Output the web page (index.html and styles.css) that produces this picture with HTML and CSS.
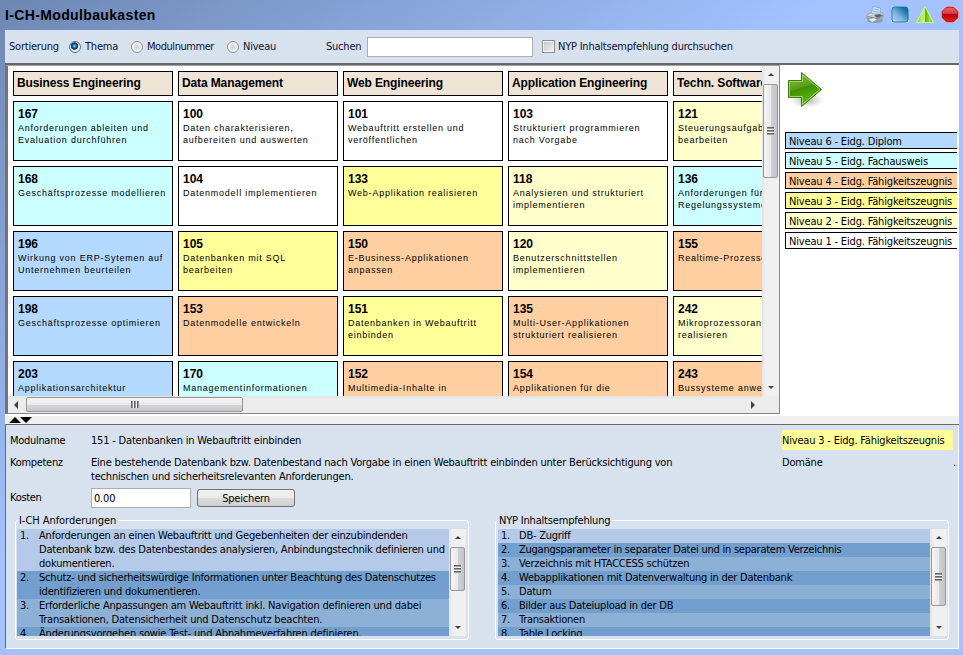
FILE: index.html
```html
<!DOCTYPE html>
<html lang="de">
<head>
  <meta charset="UTF-8" />
  <title>I-CH-Modulbaukasten</title>
  <link rel="stylesheet" href="styles.css">
</head>
<body>
  <header class="titlebar">
    <h1>I-CH-Modulbaukasten</h1>
    <div class="window-icons">
      <svg width="20" height="20" viewBox="0 0 20 20">
        <defs>
          <linearGradient id="g-print" x1="0" y1="0" x2="0" y2="1"><stop offset="0" stop-color="#f2f2ee"/><stop offset="1" stop-color="#8b9094"/></linearGradient>
        </defs>
        <ellipse cx="10" cy="15.500" rx="8" ry="2.5" fill="#5f78a8" opacity=".5"/>
        <path d="M1.500 10.500 L7 7 L17.500 8 L18.500 12 L13 17 L2 13.500 Z" fill="url(#g-print)" stroke="#8a939a" stroke-width=".7"/>
        <path d="M6 8.500 L8 1.500 L15.500 3 L15 9.500 Z" fill="#c8e2f5" stroke="#7fa3c0" stroke-width=".7"/>
        <path d="M8.500 4 L14 5 M7.800 6.300 L13.800 7.200" stroke="#8fb8d8" stroke-width="1"/>
        <path d="M9 10 L15 9 L17.500 10.500 L12 13 Z" fill="#5c646a"/>
        <path d="M2.500 11.500 L12 14 L18 10.500" fill="none" stroke="#6a7278" stroke-width=".8"/>
        <path d="M3 14.200 L9 12.800 L13 14.800 L7 17.300 Z" fill="#e9f0f2" stroke="#7a868c" stroke-width=".6"/>
      </svg>
      <svg width="20" height="20" viewBox="0 0 20 20">
        <defs>
          <linearGradient id="g-blue" x1="0" y1="1" x2="1" y2="0"><stop offset="0" stop-color="#b9d6f2"/><stop offset=".4" stop-color="#82b4dc"/><stop offset=".8" stop-color="#1672ae"/><stop offset="1" stop-color="#0868a8"/></linearGradient>
        </defs>
        <rect x="1" y="1" width="18" height="17" rx="3.500" fill="#d9ecfa"/>
        <rect x="1.900" y="1.900" width="16.200" height="15.200" rx="2.500" fill="url(#g-blue)" stroke="#0a69a8" stroke-width=".9"/>
      </svg>
      <svg width="20" height="20" viewBox="0 0 20 20">
        <defs>
          <linearGradient id="g-tri" x1="0" y1="0" x2="1" y2="0"><stop offset="0" stop-color="#7cc51e"/><stop offset=".3" stop-color="#b9ee62"/><stop offset=".48" stop-color="#c4f270"/><stop offset=".52" stop-color="#62b010"/><stop offset=".8" stop-color="#a2e048"/><stop offset="1" stop-color="#6cb81c"/></linearGradient>
        </defs>
        <path d="M10 1.500 L18.500 17.500 H1.500 Z" fill="url(#g-tri)" stroke="#d2f2a0" stroke-width="1" stroke-linejoin="round"/>
      </svg>
      <svg width="20" height="20" viewBox="0 0 20 20">
        <defs>
          <linearGradient id="g-stop" x1="0" y1="0" x2="0" y2="1"><stop offset="0" stop-color="#e06068"/><stop offset=".42" stop-color="#d8404a"/><stop offset=".5" stop-color="#bc0008"/><stop offset="1" stop-color="#e02024"/></linearGradient>
        </defs>
        <path d="M6 1 H14 L19 6 V13 L14 18 H6 L1 13 V6 Z" fill="#efc4cc"/>
        <path d="M6.400 2.200 H13.600 L17.800 6.400 V12.600 L13.600 16.800 H6.400 L2.200 12.600 V6.400 Z" fill="url(#g-stop)" stroke="#b80810"/>
      </svg>
    </div>
  </header>

  <main class="panel">
    <div class="toolbar">
      <span class="sort-label">Sortierung</span>
      <span class="radio checked"></span><span class="thema">Thema</span>
      <span class="radio"></span><span class="modulnummer">Modulnummer</span>
      <span class="radio"></span><span class="niveau">Niveau</span>
      <span class="search-label">Suchen</span>
      <input type="text" class="search">
      <span class="checkbox"></span><span class="nyp-label">NYP Inhaltsempfehlung durchsuchen</span>
    </div>

    <div class="top">
      <div class="scrollpane">
        <div class="viewport">
          <div class="column">
            <h2>Business Engineering</h2>
            <div class="card n5"><b>167</b><p>Anforderungen ableiten und<br>Evaluation durchführen</p></div>
            <div class="card n5"><b>168</b><p>Geschäftsprozesse modellieren</p></div>
            <div class="card n6"><b>196</b><p>Wirkung von ERP-Sytemen auf<br>Unternehmen beurteilen</p></div>
            <div class="card n6"><b>198</b><p>Geschäftsprozesse optimieren</p></div>
            <div class="card n6"><b>203</b><p>Applikationsarchitektur</p></div>
          </div>
          <div class="column">
            <h2>Data Management</h2>
            <div class="card n1"><b>100</b><p>Daten charakterisieren,<br>aufbereiten und auswerten</p></div>
            <div class="card n1"><b>104</b><p>Datenmodell implementieren</p></div>
            <div class="card n3"><b>105</b><p>Datenbanken mit SQL<br>bearbeiten</p></div>
            <div class="card n4"><b>153</b><p>Datenmodelle entwickeln</p></div>
            <div class="card n5"><b>170</b><p>Managementinformationen</p></div>
          </div>
          <div class="column">
            <h2>Web Engineering</h2>
            <div class="card n1"><b>101</b><p>Webauftritt erstellen und<br>veröffentlichen</p></div>
            <div class="card n3"><b>133</b><p>Web-Applikation realisieren</p></div>
            <div class="card n4"><b>150</b><p>E-Business-Applikationen<br>anpassen</p></div>
            <div class="card n3"><b>151</b><p>Datenbanken in Webauftritt<br>einbinden</p></div>
            <div class="card n4"><b>152</b><p>Multimedia-Inhalte in</p></div>
          </div>
          <div class="column">
            <h2>Application Engineering</h2>
            <div class="card n1"><b>103</b><p>Strukturiert programmieren<br>nach Vorgabe</p></div>
            <div class="card n2"><b>118</b><p>Analysieren und strukturiert<br>implementieren</p></div>
            <div class="card n2"><b>120</b><p>Benutzerschnittstellen<br>implementieren</p></div>
            <div class="card n4"><b>135</b><p>Multi-User-Applikationen<br>strukturiert realisieren</p></div>
            <div class="card n4"><b>154</b><p>Applikationen für die</p></div>
          </div>
          <div class="column">
            <h2>Techn. Software</h2>
            <div class="card n2"><b>121</b><p>Steuerungsaufgaben<br>bearbeiten</p></div>
            <div class="card n5"><b>136</b><p>Anforderungen für<br>Regelungssysteme</p></div>
            <div class="card n4"><b>155</b><p>Realtime-Prozesse</p></div>
            <div class="card n2"><b>242</b><p>Mikroprozessoranw<br>realisieren</p></div>
            <div class="card n4"><b>243</b><p>Bussysteme anwen</p></div>
          </div>
        </div>
        <div class="vbar vbar-main">
          <i class="up"></i><div class="thumb"><i class="grip"></i></div><i class="down"></i>
        </div>
        <div class="hbar">
          <i class="left"></i><div class="thumb"><i class="grip"></i></div><i class="right"></i>
        </div>
        <div class="corner"></div>
      </div>

      <aside class="legend">
        <svg class="arrow" width="38" height="38" viewBox="0 0 38 38">
          <defs>
            <linearGradient id="g-arrow" x1="0" y1="0" x2=".3" y2="1"><stop offset="0" stop-color="#8cc63e"/><stop offset=".5" stop-color="#5a9e18"/><stop offset=".54" stop-color="#3f9004"/><stop offset="1" stop-color="#5fbf10"/></linearGradient>
            <radialGradient id="g-shadow"><stop offset="0" stop-color="#777" stop-opacity=".6"/><stop offset="1" stop-color="#999" stop-opacity="0"/></radialGradient>
          </defs>
          <ellipse cx="20" cy="29" rx="17" ry="8" fill="url(#g-shadow)"/>
          <path d="M1.500 9.500 H14.500 V1.500 L34.500 18.500 L14.500 35.500 V26.500 H1.500 Z" fill="url(#g-arrow)" stroke="#3c7f0c"/>
          <path d="M2.500 25.500 V10.500 H15.500 V3.700 L33 18.500 L15.500 33.300 V25.500 Z" fill="none" stroke="#a5d766" stroke-width=".9"/>
        </svg>
        <div class="level n6">Niveau 6 - Eidg. Diplom</div>
        <div class="level n5">Niveau 5 - Eidg. Fachausweis</div>
        <div class="level n4">Niveau 4 - Eidg. Fähigkeitszeugnis</div>
        <div class="level n3">Niveau 3 - Eidg. Fähigkeitszeugnis</div>
        <div class="level n2">Niveau 2 - Eidg. Fähigkeitszeugnis</div>
        <div class="level n1">Niveau 1 - Eidg. Fähigkeitszeugnis</div>
      </aside>
    </div>

    <div class="divider">
      <svg width="26" height="6" viewBox="0 0 26 6"><path d="M0 6 L6 0 L12 6 Z M11 0 H23 L17 6 Z" fill="#000"/></svg>
    </div>

    <section class="details">
      <div class="form">
        <div class="row name-row">
          <label>Modulname</label>
          <span class="value">151 - Datenbanken in Webauftritt einbinden</span>
          <span class="side n3">Niveau 3 - Eidg. Fähigkeitszeugnis</span>
        </div>
        <div class="row comp-row">
          <label>Kompetenz</label>
          <span class="value">Eine bestehende Datenbank bzw. Datenbestand nach Vorgabe in einen Webauftritt einbinden unter Berücksichtigung von<br>technischen und sicherheitsrelevanten Anforderungen.</span>
          <span class="side">Domäne</span>
          <span class="dots">..</span>
        </div>
        <div class="row cost-row">
          <label>Kosten</label>
          <input type="text" class="cost" value="0.00">
          <button>Speichern</button>
        </div>
      </div>

      <div class="lists">
        <fieldset class="req">
          <legend>I-CH Anforderungen</legend>
          <div class="list">
            <ol>
              <li>Anforderungen an einen Webauftritt und Gegebenheiten der einzubindenden<br>Datenbank bzw. des Datenbestandes analysieren, Anbindungstechnik definieren und<br>dokumentieren.</li>
              <li>Schutz- und sicherheitswürdige Informationen unter Beachtung des Datenschutzes<br>identifizieren und dokumentieren.</li>
              <li>Erforderliche Anpassungen am Webauftritt inkl. Navigation definieren und dabei<br>Transaktionen, Datensicherheit und Datenschutz beachten.</li>
              <li>Änderungsvorgehen sowie Test- und Abnahmeverfahren definieren.</li>
            </ol>
            <div class="vbar">
              <i class="up"></i><div class="thumb"><i class="grip"></i></div><i class="down"></i>
            </div>
          </div>
        </fieldset>
        <fieldset class="nyp">
          <legend>NYP Inhaltsempfehlung</legend>
          <div class="list">
            <ol>
              <li>DB- Zugriff</li>
              <li>Zugangsparameter in separater Datei und in separatem Verzeichnis</li>
              <li>Verzeichnis mit HTACCESS schützen</li>
              <li>Webapplikationen mit Datenverwaltung in der Datenbank</li>
              <li>Datum</li>
              <li>Bilder aus Dateiupload in der DB</li>
              <li>Transaktionen</li>
              <li>Table Locking</li>
            </ol>
            <div class="vbar">
              <i class="up"></i><div class="thumb"><i class="grip"></i></div><i class="down"></i>
            </div>
          </div>
        </fieldset>
      </div>
    </section>
  </main>
</body>
</html>
```

FILE: styles.css
```css
* {
  box-sizing: border-box;
}

body {
  margin: 0;
  width: 963px;
  height: 655px;
  padding: 0 4px 6px 5px;
  overflow: hidden;
  font: 11px/14px "DejaVu Sans Condensed", "DejaVu Sans", Tahoma, sans-serif;
  font-stretch: condensed;
  letter-spacing: -0.19px;
  color: #000;
  white-space: nowrap;
  background: linear-gradient(to bottom right, #6d87b3, #a3c2ff 43%);
}

h1, h2, p, ol, fieldset {
  margin: 0;
  padding: 0;
}

/* Titelleiste */
.titlebar {
  display: flex;
  justify-content: space-between;
  height: 30px;
}

h1 {
  font: bold 14px/30px "Liberation Sans", Arial, sans-serif;
  letter-spacing: 0.36px;
}

.window-icons {
  display: flex;
  gap: 5px;
  padding-top: 5px;
  margin-right: -1px;
}

.panel {
  display: flex;
  flex-direction: column;
  height: 619px;
}

/* Werkzeugleiste */
.toolbar {
  display: flex;
  align-items: center;
  height: 33px;
  padding-left: 4px;
  background: #d7e2ee;
  color: #101030;
  letter-spacing: -0.22px;
}

.sort-label {
  width: 60px;
}

.radio {
  width: 12px;
  height: 12px;
  margin: 1px 4px 0 0;
  border: 1px solid #8e8f8f;
  border-radius: 50%;
  background: radial-gradient(circle, #d4d8dc 20%, #f4f4f4 60%);
}

.radio.checked {
  border-color: #5b7085;
  background: radial-gradient(circle at 45% 40%, #6cc0e8 5%, #0b4c80 30%, #123c60 42%, #e8f0f5 50%);
}

.thema { width: 46px; }

.modulnummer {
  width: 80px;
  letter-spacing: -0.45px;
}

.niveau { width: 83px; }
.search-label { width: 41px; }

input {
  border: 1px solid #abadb3;
  border-radius: 0;
  background: #fff;
  font: inherit;
  letter-spacing: inherit;
}

.search {
  width: 166px;
  height: 20px;
}

.checkbox {
  width: 13px;
  height: 13px;
  margin: 0 3px 0 9px;
  border: 1px solid #8e8f8f;
  background: linear-gradient(135deg, #bfc4ca, #f5f5f5);
  box-shadow: inset 0 0 0 1px #f4f4f4;
}

/* Modulübersicht */
.top {
  display: flex;
  height: 353px;
  border-top: 2px solid #696969;
  background: #fff;
}

.scrollpane {
  display: grid;
  grid-template-columns: 754px 17px;
  grid-template-rows: 330px 17px;
  width: 775px;
  height: 349px;
  border-top: 1px solid #a0a0a0;
  border-bottom: 1px solid #828790;
  border-right: 1px solid #828790;
  border-left: 3px solid #747474;
}

.viewport {
  display: flex;
  gap: 5px;
  padding: 5px 0 0 5px;
  overflow: hidden;
}

.column {
  display: flex;
  flex-direction: column;
  gap: 5px;
  flex: 0 0 160px;
  font-family: "Liberation Sans", Arial, sans-serif;
}

h2 {
  flex: 0 0 25px;
  padding-left: 3px;
  border: 1px solid #000;
  background: #efe3d6;
  font: bold 12px/22px "Liberation Sans", Arial, sans-serif;
  letter-spacing: -0.12px;
}

.card {
  flex: 0 0 60px;
  padding: 4px 0 0 4px;
  border: 1px solid #000;
  letter-spacing: 0;
}

.card b {
  display: block;
  font-size: 12px;
  line-height: 16px;
  height: 16px;
}

.card p {
  font-size: 9px;
  line-height: 12px;
  letter-spacing: 0.76px;
}

/* Farben der Niveaus */
.n1 { background: #fff; }
.n2 { background: #ffffcc; }
.n3 { background: #ffff99; }
.n4 { background: #ffcfa2; }
.n5 { background: #ccffff; }
.n6 { background: #b3d9ff; }

/* Scrollbalken */
.vbar {
  display: flex;
  flex-direction: column;
  align-items: center;
  width: 17px;
  padding: 7px 1px 7px;
  background: linear-gradient(to right, #e3e3e3, #f0f0f0 20%, #f0f0f0);
}

.hbar {
  display: flex;
  align-items: center;
  padding: 0 7px 0 6px;
  background: linear-gradient(#e3e3e3, #ececec 20%, #ececec);
}

.corner {
  background: #ececec;
}

.thumb {
  display: flex;
  align-items: center;
  justify-content: center;
  border: 1px solid #979797;
  border-radius: 2px;
}

.vbar .thumb {
  width: 15px;
  height: 44px;
  margin-top: 8px;
  background: linear-gradient(to right, #f5f5f5, #e9e9eb 50%, #d2d2d6 52%, #c4c4c8);
}

.vbar-main .thumb { height: 94px; }
.nyp .vbar .thumb { height: 59px; }

.hbar .thumb {
  width: 217px;
  height: 15px;
  margin-left: 8px;
  background: linear-gradient(#f5f5f5, #e9e9eb 50%, #d6d6da 52%, #c8c8cc);
}

.vbar .grip {
  width: 7px;
  height: 8px;
  background: repeating-linear-gradient(#666 0 1px, #999 1px 2px, #f4f4f4 2px 3px);
}

.hbar .grip {
  width: 8px;
  height: 7px;
  background: repeating-linear-gradient(to right, #666 0 1px, #999 1px 2px, #f4f4f4 2px 3px);
}

.up, .down {
  border: solid transparent;
  border-width: 0 3.5px;
}

.up { border-bottom: 3px solid #404040; }

.down {
  margin-top: auto;
  border-top: 3px solid #404040;
}

.left, .right {
  border: solid transparent;
  border-width: 4px 0;
}

.left { border-right: 4px solid #404040; }

.right {
  margin-left: auto;
  border-left: 4px solid #404040;
}

/* Legende */
.legend {
  width: 177px;
  padding: 5px 0 0 5px;
}

.arrow {
  display: block;
  margin: 0 0 23px 2px;
  padding-top: 1px;
  height: 39px;
}

.level {
  height: 17px;
  margin-bottom: 3px;
  padding-left: 3px;
  border: 1px solid #000;
  border-right: 0;
  line-height: 17px;
  letter-spacing: -0.17px;
}

.divider {
  height: 9px;
  padding: 1px 0 0 4px;
  background: #f0f0f0;
  border-bottom: 1px solid #696969;
}

.divider svg {
  display: block;
}

/* Detailbereich */
.details {
  height: 224px;
  padding: 5px 0 0 4px;
  border: 1px solid #fff;
  border-top: 0;
  border-left-color: #696969;
  background: #d7e2ee;
}

.row {
  display: flex;
}

.row label {
  width: 81px;
  letter-spacing: -0.3px;
}

.row .value { width: 691px; }

.name-row {
  height: 20px;
  line-height: 21px;
}

.side {
  width: 171px;
}

.dots {
  width: 4px;
  overflow: hidden;
}

.comp-row {
  height: 33px;
  padding-top: 6px;
}

.cost-row {
  height: 30px;
  align-items: center;
}

.cost {
  width: 100px;
  height: 20px;
  padding: 1px 2px 0;
}

button {
  width: 98px;
  height: 18px;
  margin-left: 6px;
  padding: 1px 0 0;
  border: 1px solid #707070;
  border-radius: 3px;
  background: linear-gradient(#f2f2f2, #ebebeb 50%, #ddd 51%, #cfcfcf);
  font: inherit;
  letter-spacing: inherit;
}

.lists {
  display: flex;
  gap: 26px;
  padding-left: 5px;
}

fieldset {
  width: 454px;
  height: 127px;
  min-width: 0;
  border: 1px solid #fff;
  border-radius: 3px;
}

legend {
  margin-left: 2px;
  padding: 1px 2px 0 1px;
  height: 14px;
  line-height: 14px;
}

.req legend { letter-spacing: -0.05px; }

.list {
  display: flex;
  height: 107px;
  margin: 2px 0 0 1px;
}

.nyp .list { margin-left: 2px; }

ol {
  width: 432px;
  overflow: hidden;
  list-style: none;
  counter-reset: nr;
}

li {
  position: relative;
  padding-left: 22px;
  counter-increment: nr;
  background: #8cb0d6;
  line-height: 14px;
}

.nyp li {
  padding-left: 21px;
  letter-spacing: -0.24px;
}

li::before {
  content: counter(nr) ".";
  position: absolute;
  left: 3px;
}

li:nth-child(even) { background: #729fcd; }
li:first-child { background: #b4cae8; }
```
